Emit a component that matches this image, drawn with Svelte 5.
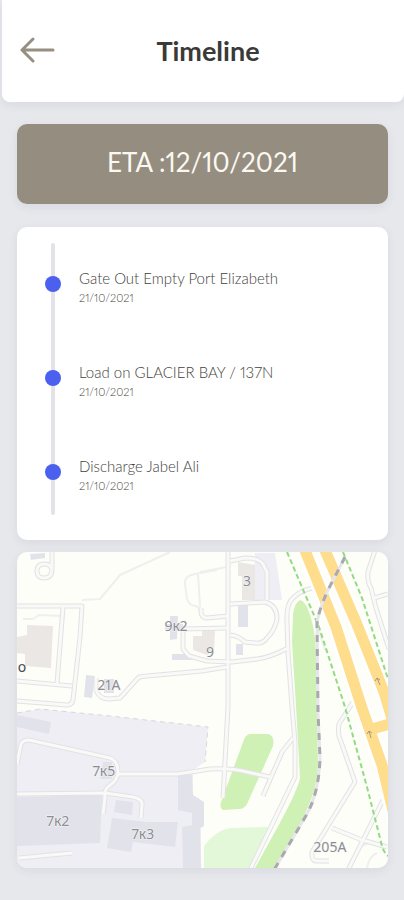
<script lang="ts">
    interface Stop {
        title: string;
        date: string;
    }

    interface MapLabel {
        text: string;
        x: number;
        y: number;
        dark?: boolean;
    }

    const eta = "12/10/2021";

    const stops: Stop[] = [
        { title: "Gate Out Empty Port Elizabeth", date: "21/10/2021" },
        { title: "Load on GLACIER BAY / 137N", date: "21/10/2021" },
        { title: "Discharge Jabel Ali", date: "21/10/2021" },
    ];

    // ── Map layers, bottom to top ──
    const yards = [
        "M0 161 L23 157 L93 164 L191 175 L188 210 L176 218 L176 243 L187 250 V274 L184 276 V316 H0Z",
        "M238 1 H258 L265 48 H236Z",
    ];

    const blocks = [
        "M0 245 L85 243 L83 291 L0 294Z",
        "M95 266 L130 270 L161 270 L158 295 L116 290 L114 300 L90 296Z",
        "M99 248 L116 250 L115 263 L97 260Z",
        "M0 163 L34 170 L32 182 L0 175Z",
        "M161 221 L175 223 L176 243 L187 250 V274 L183 276 L184 316 H166 L165 275 L175 273 V261 L161 258Z",
        "M86 210 H95 V227 H83Z",
        "M13 2 L28 1 V6 L14 8Z",
        "M69 123 L78 124 L75 146 L67 145Z",
        "M87 127 H97 V141 H87Z",
        "M153 64 H161 L160 87 L153 88Z",
        "M148 72 H166 V79 H148Z",
        "M155 102 H176 V108 H155Z",
        "M221 53 H231 V75 H221Z",
        "M219 92 H226 V103 H219Z",
    ];

    const buildings = [
        "M10 73 L36 74 L34 116 L8 114 V102 L0 101 V85 L10 83Z",
        "M185 76 H198 L197 100 L190 103 L176 98 V84 H185Z",
        "M221 10 L238 13 V48 H225 V24 H221Z",
    ];

    const lanes = [
        "M0 212 L4 192 Q6 188 12 188 L93 206 Q101 209 101 220 Q101 228 92 234 Q87 238 88 245 L86 262",
        "M101 222 H160 Q175 220 193 217 Q215 216 230 220 L253 225",
        "M0 242 L88 241 L116 245 Q126 247 125 253 L124 266",
        "M2 306 L55 301",
        "M0 54 H65 L63 85 L56 148 Q55 153 50 153 L0 149",
        "M46 55 L40 132",
        "M0 129 L55 134",
        "M35 0 V17 Q35 26 27 26 Q20 26 20 19 Q20 12 27 12 Q34 12 35 18",
        "M79 126 V138 Q82 147 92 147 L103 146 L121 126 Q124 124 130 124 L185 119 L210 115",
        "M211 76 L166 77 V97 L172 104 L190 109 L215 110 L240 107 Q252 106 271 96",
        "M184 56 Q183 66 190 66 L211 64",
        "M211 0 V155 L206 246",
        "M213 9 L228 6 Q244 6 247 14 L250 20 V48",
        "M213 52 L248 50 Q260 53 260 67 Q258 78 250 86 Q246 92 238 91 L228 90 Q220 83 213 83",
        "M358 -2 L351 20 Q350 30 354 36 L359 56 L372 97",
        "M357 46 L371 42",
        "M300 35 Q283 38 276 46 Q269 52 270 70 L271 100 L275 155 L278 190 V225 L250 283 L233 318",
        "M276 186 L265 200 L246 244",
        "M336 150 L322 172 Q321 178 322 184 L338 230 L295 300 Q294 309 300 309 H312",
        "M315 276 L345 288 L370 295",
        "M366 248 L331 318",
    ];

    const footpaths = [
        "M153 0 L103 23 L83 47 L65 48",
        "M200 18 L178 22 Q167 24 168 32 L170 47 Q172 53 178 54 L184 56",
        "M181 22 L183 54",
        "M6 67 H16 L22 63 L46 64",
        "M183 20 L210 15",
        "M298 66 L308 98",
        "M342 296 Q356 286 364 295",
        "M350 316 Q352 304 360 301",
    ];

    const greens = [
        "M283 48 Q278 50 276 62 L275 90 L279 155 L283 226 Q280 240 260 276 L238 316 H258 L284 270 Q302 235 301 210 L299 100 Q298 72 290 55 Q286 48 283 48Z",
        "M233 182 H251 Q258 184 256 194 L230 252 Q227 257 222 257 L206 258 Q202 256 204 250 L225 193 Q228 182 233 182Z",
    ];

    const highways = [
        "M287 -4 L319 75 L345 156 L365 213 L380 275",
        "M307 -4 L339 70 L367 140 L382 190",
        "M355 177 L373 172",
    ];

    const treeLines = [
        "M270 0 L302 75 L328 155 L350 235 L364 290 Q366 300 371 304",
        "M326 0 L345 46 L371 127",
    ];

    const railway =
        "M328 5 L311 38 Q301 60 300 72 L301 160 L303 206 Q302 240 290 262 L257 318";

    const labels: MapLabel[] = [
        { text: "3", x: 230, y: 34 },
        { text: "9к2", x: 159, y: 79 },
        { text: "9", x: 193, y: 105 },
        { text: "21A", x: 92, y: 138 },
        { text: "o", x: 5, y: 120, dark: true },
        { text: "7к5", x: 87, y: 224 },
        { text: "7к2", x: 41, y: 274 },
        { text: "7к3", x: 126, y: 287 },
        { text: "205A", x: 313, y: 300 },
    ];
</script>

<div class="screen">
    <header class="topbar">
        <button class="back" type="button" aria-label="Back">
            <svg viewBox="0 0 36 28" width="36" height="28" aria-hidden="true">
                <path d="M33 13 H2 M13 2 L2 13 L13 24" />
            </svg>
        </button>
        <h1 class="title">Timeline</h1>
    </header>

    <main class="content">
        <p class="eta">ETA :{eta}</p>

        <section class="card timeline" aria-label="Shipment timeline">
            <ol class="stops">
                {#each stops as stop}
                    <li class="stop">
                        <span class="dot"></span>
                        <div>
                            <h2 class="stop-title">{stop.title}</h2>
                            <time class="stop-date">{stop.date}</time>
                        </div>
                    </li>
                {/each}
            </ol>
        </section>

        <section class="card map" aria-label="Map">
            <svg class="map-canvas" viewBox="0 0 371 316" role="img" aria-label="Street map">
                {#each yards as d}<path class="yard" {d} />{/each}
                <path class="fence" d="M0 161 L23 157 L93 164 L191 175 L188 210" />
                {#each blocks as d}<path class="block" {d} />{/each}
                {#each buildings as d}<path class="building" {d} />{/each}
                <path
                    class="meadow"
                    d="M187 294 Q200 277 215 276 L250 275 L254 278 L235 316 H187Z"
                />
                {#each greens as d}<path class="green" {d} />{/each}

                {#each footpaths as d}<path class="footpath" {d} />{/each}
                {#each lanes as d}<path class="lane-edge" {d} />{/each}
                {#each lanes as d}<path class="lane" {d} />{/each}

                {#each highways as d}<path class="highway-edge" {d} />{/each}
                {#each highways as d}<path class="highway" {d} />{/each}
                {#each treeLines as d}<path class="trees" {d} />{/each}

                <path class="rail" d={railway} />
                <path class="rail-ties" d={railway} />

                <path class="arrow" d="M363 133 L360 126 M358 129 L360 126 L363 128" />
                <path class="arrow" d="M354 186 L352 179 M350 182 L352 179 L355 181" />

                {#each labels as label}
                    <text class="label" class:dark={label.dark} x={label.x} y={label.y}>
                        {label.text}
                    </text>
                {/each}
            </svg>
        </section>
    </main>
</div>

<style>
    :global(body) {
        margin: 0;
        background: #e7e8ec;
    }

    .screen {
        font-family: Lato, "Liberation Sans", sans-serif;
        font-variant-numeric: proportional-nums;
        color: #3a3a38;
    }

    /* ── Header ── */
    .topbar {
        display: flex;
        align-items: center;
        box-sizing: border-box;
        min-height: 102px;
        margin-left: 2px;
        padding: 0 48px 0 14px;
        background: #fff;
        border-radius: 0 0 8px 8px;
        box-shadow: 0 3px 10px rgba(60, 70, 90, 0.08);
    }

    .back {
        display: flex;
        padding: 4px;
        border: 0;
        background: none;
        cursor: pointer;
    }

    .back svg {
        fill: none;
        stroke: #979081;
        stroke-width: 3;
        stroke-linecap: round;
        stroke-linejoin: round;
    }

    .title {
        flex: 1;
        margin: 0;
        font-size: 27px;
        line-height: 32px;
        font-weight: 700;
        text-align: center;
    }

    /* ── Content ── */
    .content {
        display: flex;
        flex-direction: column;
        padding: 22px 16px 32px 17px;
    }

    .eta {
        margin: 0 0 23px;
        padding: 20px 0 24px;
        border-radius: 10px;
        background: #958d7f;
        box-shadow: 0 3px 10px rgba(60, 70, 90, 0.08);
        color: #fbf8f2;
        font-size: 26px;
        line-height: 36px;
        font-weight: 400;
        text-align: center;
    }

    .card {
        overflow: hidden;
        border-radius: 10px;
        background: #fff;
        box-shadow: 0 3px 10px rgba(60, 70, 90, 0.08);
    }

    .timeline {
        margin-bottom: 12px;
        padding: 16px 28px 25px;
    }

    .stops {
        position: relative;
        display: flex;
        flex-direction: column;
        gap: 54px;
        margin: 0;
        padding: 25px 0 19px;
        list-style: none;
    }

    .stops::before {
        content: "";
        position: absolute;
        top: 0;
        bottom: 0;
        left: 6px;
        width: 4px;
        border-radius: 2px;
        background: #e3e3e7;
    }

    .stop {
        display: flex;
        align-items: flex-start;
        gap: 18px;
    }

    .dot {
        position: relative;
        flex: none;
        width: 16px;
        height: 16px;
        margin-top: 8px;
        border-radius: 50%;
        background: #4b60ee;
    }

    .stop-title {
        margin: 0;
        font-size: 15px;
        line-height: 20px;
        font-weight: 300;
        color: #3f3f3d;
    }

    .stop-date {
        display: block;
        font-size: 11px;
        line-height: 20px;
        font-weight: 300;
        color: #3f3f3d;
    }

    /* ── Map ── */
    .map {
        background: #fdfef8;
    }

    .map-canvas {
        display: block;
        width: 100%;
        height: auto;
        fill: none;
        stroke-linejoin: round;
    }

    .yard { fill: #efeef5; }
    .block { fill: #e2e3ea; }
    .building { fill: #ebe7e4; }
    .meadow { fill: #e3f8d8; }
    .green { fill: #d0f1b6; }

    .fence {
        stroke: #d6d6dc;
        stroke-dasharray: 5 4;
    }

    .footpath {
        stroke: #efefed;
        stroke-width: 2;
    }

    .lane-edge {
        stroke: #e2e2e4;
        stroke-width: 5;
    }

    .lane {
        stroke: #f9f9f8;
        stroke-width: 3;
    }

    .highway-edge {
        stroke: #fff;
        stroke-width: 16;
    }

    .highway {
        stroke: #fedd8d;
        stroke-width: 11;
    }

    .trees {
        stroke: #92db83;
        stroke-width: 2;
        stroke-dasharray: 5 3;
    }

    .rail {
        stroke: #e6e6ea;
        stroke-width: 3;
    }

    .rail-ties {
        stroke: #a9a9b0;
        stroke-width: 3;
        stroke-dasharray: 7 7;
    }

    .arrow {
        stroke: #a69b80;
    }

    .label {
        fill: #8d8d93;
        stroke: #f7f7f7;
        stroke-width: 1;
        paint-order: stroke;
        font-family: "Noto Sans", "Open Sans", sans-serif;
        font-size: 14px;
        text-anchor: middle;
    }

    .dark {
        fill: #4c4c50;
    }
</style>
